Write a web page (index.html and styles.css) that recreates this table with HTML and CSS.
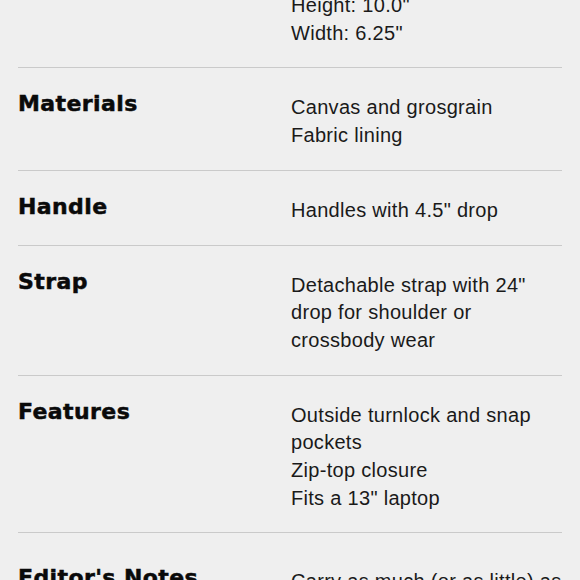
FILE: index.html
```html
<!DOCTYPE html>
<html>
<head>
<meta charset="utf-8">
<link rel="stylesheet" href="styles.css">
</head>
<body>
<div class="specs">
  <div class="row first">
    <div class="label"></div>
    <div class="value"><div>Height: 10.0"</div><div>Width: 6.25"</div></div>
  </div>
  <div class="row">
    <div class="label">Materials</div>
    <div class="value"><div>Canvas and grosgrain</div><div>Fabric lining</div></div>
  </div>
  <div class="row">
    <div class="label">Handle</div>
    <div class="value"><div>Handles with 4.5" drop</div></div>
  </div>
  <div class="row">
    <div class="label">Strap</div>
    <div class="value"><div>Detachable strap with 24" drop for shoulder or crossbody wear</div></div>
  </div>
  <div class="row">
    <div class="label">Features</div>
    <div class="value"><div>Outside turnlock and snap pockets</div><div>Zip-top closure</div><div>Fits a 13" laptop</div></div>
  </div>
  <div class="row notes">
    <div class="label">Editor's Notes</div>
    <div class="value"><div>Carry as much (or as little) as you like.</div></div>
  </div>
</div>
</body>
</html>
```

FILE: styles.css
```css
html, body {
  margin: 0;
  padding: 0;
  background: #efefef;
  overflow: hidden;
}
.specs {
  padding: 0 18px;
  margin-top: -8px;
}
.row {
  display: grid;
  grid-template-columns: 273px 1fr;
  padding: 26px 0 20px;
  border-bottom: 1px solid #cacaca;
}
.row.first {
  padding-top: 0;
}
.row.notes {
  padding-top: 35px;
  border-bottom: none;
}
.label {
  font-family: "DejaVu Sans", sans-serif;
  font-weight: bold;
  font-size: 22px;
  line-height: 20px;
  letter-spacing: 0.4px;
  color: #0a0a0a;
  -webkit-text-stroke: 0.5px #0a0a0a;
}
.value {
  font-family: "Liberation Sans", Arial, sans-serif;
  font-size: 20px;
  line-height: 27.7px;
  letter-spacing: 0.3px;
  color: #1a1a1a;
}
```
